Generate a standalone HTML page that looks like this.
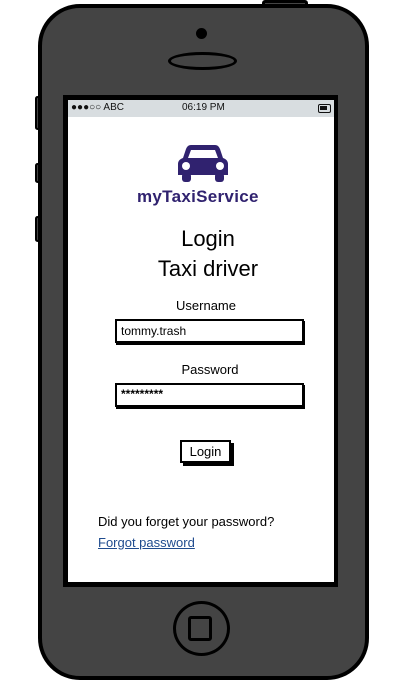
<!DOCTYPE html>
<html><head><style>
*{margin:0;padding:0;box-sizing:border-box}
body{width:407px;height:682px;background:#fff;position:relative;overflow:hidden;font-family:"Liberation Sans",sans-serif}
.a{position:absolute}
.phone{left:38px;top:4px;width:331px;height:676px;background:#444;border:4px solid #000;border-radius:42px}
.btn{background:#444;border:2px solid #000;border-radius:3px;width:5px;left:35px}
.screen{left:63px;top:95px;width:275px;height:492px;background:#000}
.white{left:68px;top:100px;width:266px;height:482px;background:#fff}
.status{left:68px;top:100px;width:266px;height:17px;background:#d8dde0;font-size:10px;color:#111}
.c{text-align:center;width:407px;left:0}
.inp{background:#fff;border:2px solid #000;box-shadow:1px 2px 0 #000;font-size:12px;padding:3px 4px;height:24px;left:115px;width:189px}
</style></head><body>
<div class="a btn" style="top:96px;height:34px"></div>
<div class="a btn" style="top:163px;height:20px"></div>
<div class="a btn" style="top:216px;height:26px"></div>
<div class="a" style="left:262px;top:0;width:46px;height:8px;background:#444;border:3px solid #000;border-radius:3px"></div>
<div class="a phone"></div>
<div class="a" style="left:196px;top:28px;width:11px;height:11px;border-radius:50%;background:#000"></div>
<div class="a" style="left:168px;top:52px;width:69px;height:18px;border:3px solid #000;border-radius:50%"></div>
<div class="a screen"></div>
<div class="a white"></div>
<div class="a status"><span class="a" style="left:3px;top:2px">●●●○○ ABC</span><span class="a" style="left:114px;top:2px">06:19 PM</span>
<span class="a" style="left:250px;top:4px;width:13px;height:9px;border:1.5px solid #111;border-radius:2px"><span class="a" style="left:1px;top:1px;width:7px;height:4px;background:#111"></span></span></div>
<svg class="a" style="left:178px;top:143px" width="50" height="40" viewBox="0 0 50 40">
<path d="M13 2h24c3 0 4 2 5 4l3 9c3 1 5 3 5 6v11h-50v-11c0-3 2-5 5-6l3-9c1-2 2-4 5-4z" fill="#30226f"/>
<path d="M13 7h24l3 8h-30z" fill="#fff"/>
<rect x="4" y="30" width="9" height="9" rx="3" fill="#30226f"/><rect x="37" y="30" width="9" height="9" rx="3" fill="#30226f"/>
<circle cx="8" cy="23" r="4" fill="#fff"/><circle cx="42" cy="23" r="4" fill="#fff"/>
</svg>
<div class="a" style="left:137px;top:187px;font-size:17px;font-weight:bold;color:#30226f;letter-spacing:.3px">myTaxiService</div>
<div class="a c" style="top:226px;font-size:22px;left:8px;width:400px">Login</div>
<div class="a c" style="top:256px;font-size:22px;left:8px;width:400px">Taxi driver</div>
<div class="a c" style="top:298px;font-size:13px;left:6px;width:400px">Username</div>
<div class="a inp" style="top:319px">tommy.trash</div>
<div class="a c" style="top:362px;font-size:13px;left:10px;width:400px">Password</div>
<div class="a inp" style="top:383px;font-size:12px;font-weight:bold;padding-top:2px">*********</div>
<div class="a" style="left:180px;top:440px;width:51px;height:23px;border:2px solid #000;box-shadow:3px 3px 0 #000;background:#fff;font-size:13px;text-align:center;line-height:19px">Login</div>
<div class="a" style="left:98px;top:514px;font-size:13px">Did you forget your password?</div>
<div class="a" style="left:98px;top:535px;font-size:13px;color:#1f4b8e;text-decoration:underline">Forgot password</div>
<div class="a" style="left:173px;top:601px;width:57px;height:55px;border:3px solid #000;border-radius:50%"></div>
<div class="a" style="left:188px;top:616px;width:24px;height:25px;border:3px solid #000;border-radius:3px"></div>
</body></html>
